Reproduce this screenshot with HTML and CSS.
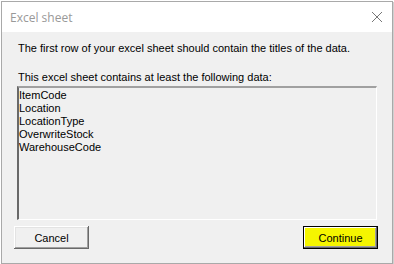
FILE: index.html
```html
<!DOCTYPE html>
<html>
<head>
<meta charset="utf-8">
<link rel="stylesheet" href="styles.css">
</head>
<body>
<div class="window">
  <div class="titlebar">
    <span class="title">Excel sheet</span>
    <svg class="close" width="12" height="12" viewBox="0 0 12 12"><path d="M1 1L11 11M11 1L1 11" stroke="#777" stroke-width="1" fill="none"/></svg>
  </div>
  <div class="body">
    <p class="msg">The first row of your excel sheet should contain the titles of the data.</p>
    <p class="msg2">This excel sheet contains at least the following data:</p>
    <div class="list">
      <div>ItemCode</div>
      <div>Location</div>
      <div>LocationType</div>
      <div>OverwriteStock</div>
      <div>WarehouseCode</div>
    </div>
    <div class="buttons">
      <button class="btn">Cancel</button>
      <button class="btn primary">Continue</button>
    </div>
  </div>
</div>
</body>
</html>
```
FILE: styles.css
```css
html, body { margin: 0; padding: 0; background: #ffffff; }
body { width: 394px; height: 264px; overflow: hidden; font-family: "Liberation Sans", Arial, sans-serif; }
.window {
  margin: 1px 0 0 1px;
  width: 390px;
  height: 261px;
  border: 1px solid #a9a9a9;
  background: #f0f0f0;
  display: flex;
  flex-direction: column;
  box-shadow: 1px 1px 0 #d0d0d0;
}
.titlebar {
  height: 30px;
  background: #ffffff;
  display: flex;
  align-items: center;
  justify-content: space-between;
  padding: 0 9px 0 8px;
}
.title { font-family: "Open Sans", "Segoe UI", sans-serif; font-size: 12px; color: #999; }
.close { display: block; }
.body { flex: 1; display: flex; flex-direction: column; padding: 0 14px 0 12px; font-size: 11px; color: #000; }
.msg { margin: 10px 0 0 4px; line-height: 13px; }
.msg2 { margin: 16px 0 0 4px; line-height: 13px; }
.list {
  margin: 2px 0 0 3px;
  border-top: 2px solid #a0a0a0;
  border-left: 2px solid #696969;
  border-right: 1px solid #ffffff;
  border-bottom: 1px solid #ffffff;
  padding: 1px 0 0 0;
  line-height: 13px;
  width: 360px;
  box-sizing: border-box;
  height: 134px;
}
.buttons { display: flex; justify-content: space-between; margin-top: 6px; }
.btn {
  width: 75px;
  height: 23px;
  font-family: "Liberation Sans", Arial, sans-serif;
  font-size: 11px;
  background: #f0f0f0;
  border: none;
  box-shadow: inset -1px -1px 0 #696969, inset 1px 1px 0 #ffffff, inset -2px -2px 0 #a0a0a0, inset 2px 2px 0 #e3e3e3;
  padding: 0;
  color: #000;
}
.primary {
  background: #f5f500;
  box-shadow: inset -1px -1px 0 #000, inset 1px 1px 0 #000, inset -2px -2px 0 #696969, inset 2px 2px 0 #ffffff, inset -3px -3px 0 #a0a0a0;
}
```
